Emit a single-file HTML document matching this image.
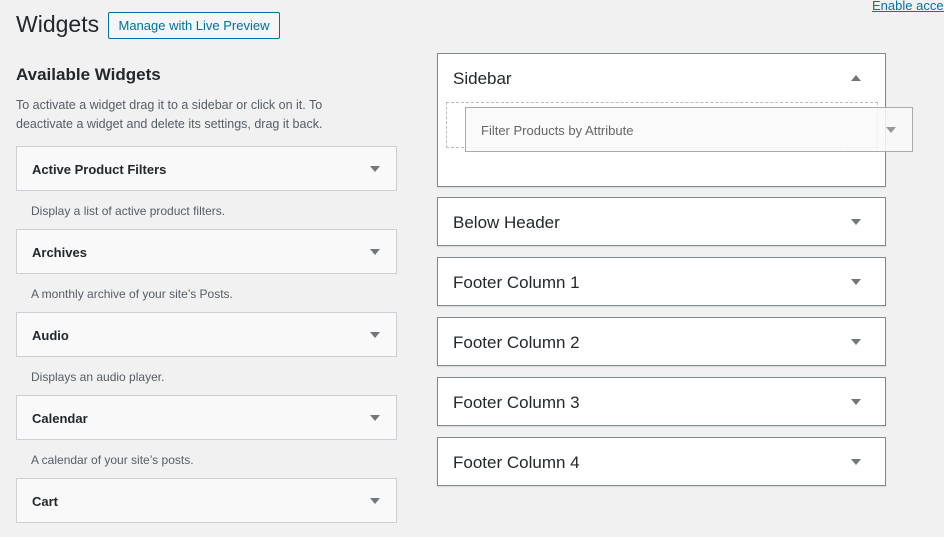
<!DOCTYPE html>
<html><head><style>
html,body{overflow:hidden}
body{margin:0;width:944px;height:537px;background:#f1f1f1;font-family:"Liberation Sans",sans-serif;color:#23282d;position:relative;overflow:hidden}
.a{position:absolute}
.w{position:absolute;left:16px;width:379px;height:43px;background:#f9f9f9;border:1px solid #ccd0d4;font-size:13px;font-weight:bold;box-sizing:content-box}
.w span{position:absolute;left:15px;top:15px}
.tri{position:absolute;width:0;height:0;border-left:5px solid transparent;border-right:5px solid transparent;border-top:6px solid #72777c}
.up{border-top:none;border-bottom:6px solid #72777c}
.d{position:absolute;left:31px;font-size:12px;color:#555d66}
.s{position:absolute;left:437px;width:447px;height:47px;background:#fff;border:1px solid #7e8993;box-shadow:0 1px 1px rgba(0,0,0,.1);font-size:17px}
.s span{position:absolute;left:15px;top:15px}
</style></head><body>
<div class="a" style="left:16px;top:11px;font-size:23px;">Widgets</div>
<div class="a" style="left:108px;top:12px;width:170px;height:25px;border:1px solid #0071a1;background:#f3f5f6;color:#0071a1;font-size:13px;line-height:25px;text-align:center;border-radius:2px">Manage with Live Preview</div>
<div class="a" style="left:872px;top:-2px;width:72px;overflow:hidden;font-size:13px;color:#0073aa;text-decoration:underline;white-space:nowrap">Enable accessibility mode</div>
<div class="a" style="left:16px;top:65px;font-size:17px;font-weight:bold">Available Widgets</div>
<div class="a" style="left:16px;top:96px;font-size:12.5px;color:#555d66;line-height:19px;width:360px">To activate a widget drag it to a sidebar or click on it. To deactivate a widget and delete its settings, drag it back.</div>

<div class="w" style="top:146px"><span>Active Product Filters</span><div class="tri" style="left:353px;top:19px"></div></div>
<div class="d" style="top:204px">Display a list of active product filters.</div>
<div class="w" style="top:229px"><span>Archives</span><div class="tri" style="left:353px;top:19px"></div></div>
<div class="d" style="top:287px">A monthly archive of your site’s Posts.</div>
<div class="w" style="top:312px"><span>Audio</span><div class="tri" style="left:353px;top:19px"></div></div>
<div class="d" style="top:370px">Displays an audio player.</div>
<div class="w" style="top:395px"><span>Calendar</span><div class="tri" style="left:353px;top:19px"></div></div>
<div class="d" style="top:453px">A calendar of your site’s posts.</div>
<div class="w" style="top:478px"><span>Cart</span><div class="tri" style="left:353px;top:19px"></div></div>

<div class="s" style="top:53px;height:132px"><span>Sidebar</span><div class="tri up" style="left:413px;top:21px"></div></div>
<div class="a" style="left:446px;top:102px;width:430px;height:44px;border:1px dashed #bbb"></div>
<div class="a" style="left:465px;top:107px;width:446px;height:43px;border:1px solid #aaa;background:rgba(249,249,249,.85);font-size:13px;color:#666"><span class="a" style="left:15px;top:15px">Filter Products by Attribute</span><div class="tri" style="left:420px;top:19px;border-top-color:#999"></div></div>
<div class="s" style="top:197px"><span>Below Header</span><div class="tri" style="left:413px;top:21px"></div></div>
<div class="s" style="top:257px"><span>Footer Column 1</span><div class="tri" style="left:413px;top:21px"></div></div>
<div class="s" style="top:317px"><span>Footer Column 2</span><div class="tri" style="left:413px;top:21px"></div></div>
<div class="s" style="top:377px"><span>Footer Column 3</span><div class="tri" style="left:413px;top:21px"></div></div>
<div class="s" style="top:437px"><span>Footer Column 4</span><div class="tri" style="left:413px;top:21px"></div></div>
</body></html>
